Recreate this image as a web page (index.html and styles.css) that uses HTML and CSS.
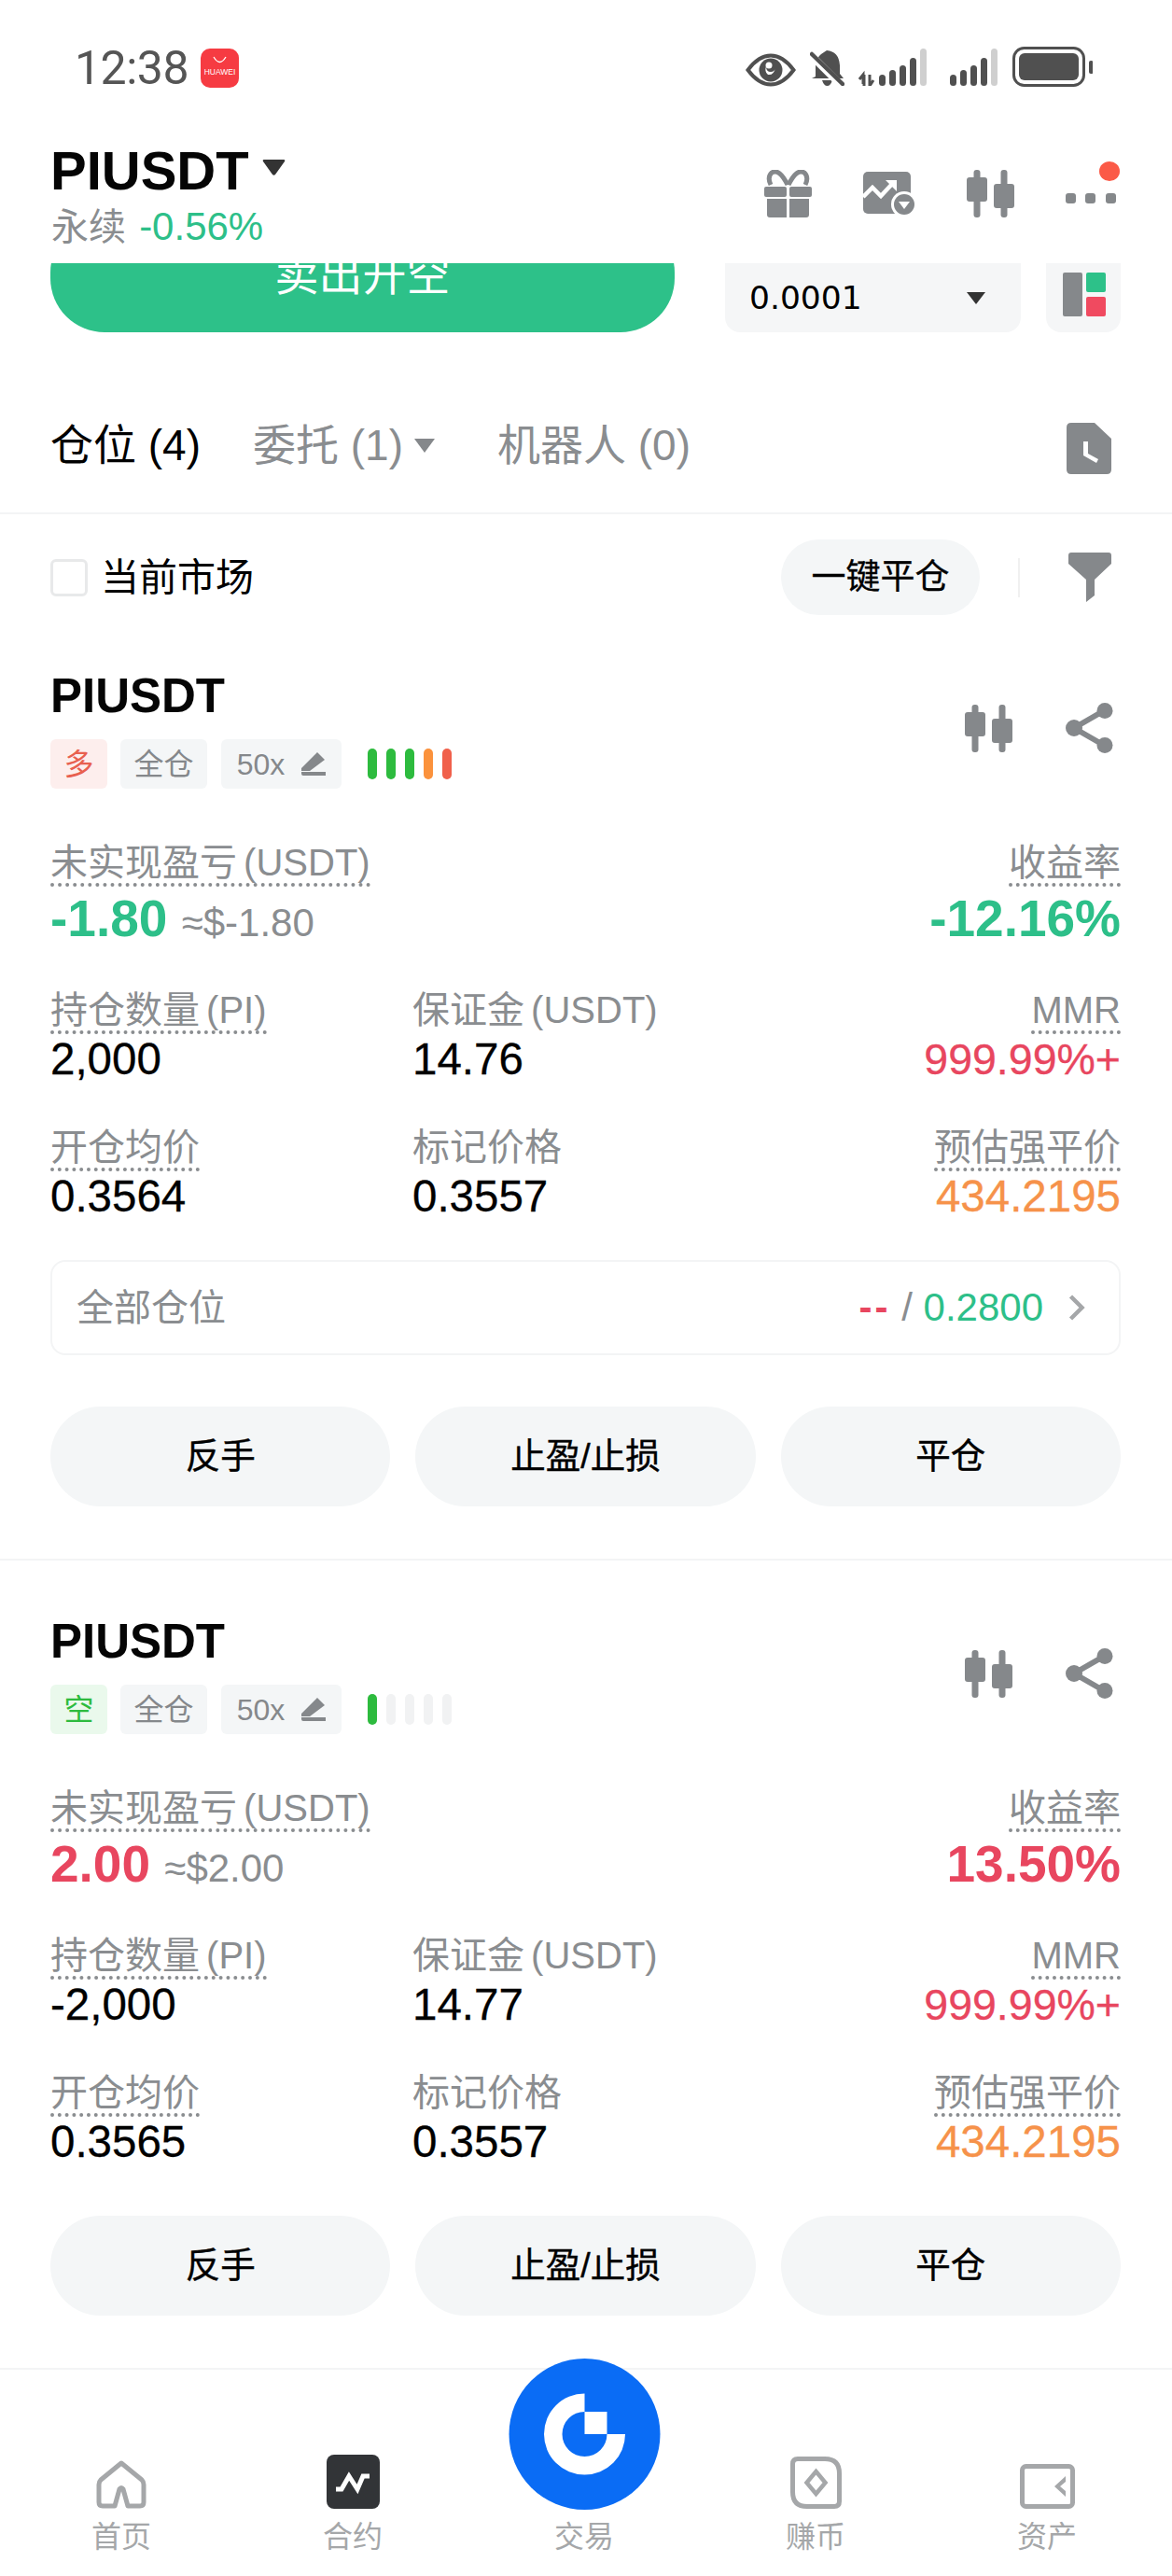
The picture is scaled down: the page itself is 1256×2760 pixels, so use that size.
FILE: index.html
```html
<!DOCTYPE html>
<html lang="zh">
<head>
<meta charset="utf-8">
<title>PIUSDT</title>
<link rel="stylesheet" href="styles.css">
</head>
<body>
<div class="page">
  <svg width="0" height="0" class="defs">
    <defs>
      <g id="candles">
        <rect x="7.500" y="0" width="7" height="51" rx="3"/>
        <rect x="0" y="8" width="22" height="26" rx="3"/>
        <rect x="36.500" y="0" width="7" height="51" rx="3"/>
        <rect x="29" y="15" width="22" height="26" rx="3"/>
      </g>
    </defs>
  </svg>

  <div class="status">
    <span class="time">12:38</span>
    <svg class="hw" width="41" height="42" viewBox="0 0 41 42">
      <rect width="41" height="42" rx="10" fill="#f63b42"/>
      <path d="M14 9 Q20.500 20 27 9" fill="none" stroke="#fff" stroke-width="1.300"/>
      <text x="20.500" y="28" text-anchor="middle" class="hw-text">HUAWEI</text>
    </svg>
    <div class="status-right">
      <svg width="54" height="36" viewBox="0 0 54 36">
        <path d="M2.500 18 Q14 2.500 27 2.500 Q40 2.500 51.500 18 Q40 33.500 27 33.500 Q14 33.500 2.500 18 Z" fill="none" stroke="#505050" stroke-width="4"/>
        <circle cx="27" cy="18" r="12.500" fill="#505050"/>
        <path d="M22 14 Q22 20 27 20 Q31 20 32 16 Q30 24 24 23 Q20 20 22 14 Z" fill="#fff"/>
        <circle cx="25" cy="13" r="3.500" fill="#fff"/>
      </svg>
      <svg class="bell" width="37" height="40" viewBox="0 0 37 40">
        <path d="M18 2 Q31 3 32 18 V27 L36 32 H2 L6 30 V17 Q7 10 12 6 Z" fill="#505050"/>
        <path d="M13 34 H24 Q22 40 18.500 40 Q15 40 13 34 Z" fill="#505050"/>
        <path d="M2 8 L32 38" stroke="#fff" stroke-width="8"/>
        <path d="M2 6 L35 38" stroke="#505050" stroke-width="4.500" stroke-linecap="round"/>
      </svg>
      <svg class="sig1" width="73" height="40" viewBox="0 0 73 40">
        <path d="M5 38 V28 L1 33 M6 28 V40 M12 28 V40 L16 34" fill="none" stroke="#505050" stroke-width="3"/>
        <rect x="22" y="28" width="7" height="12" rx="3.500" fill="#505050"/>
        <rect x="33" y="23" width="7" height="17" rx="3.500" fill="#505050"/>
        <rect x="44" y="18" width="7" height="22" rx="3.500" fill="#505050"/>
        <rect x="55" y="10" width="7" height="30" rx="3.500" fill="#505050"/>
        <rect x="66" y="0" width="7" height="40" rx="3.500" fill="#cfcfcf"/>
      </svg>
      <svg class="sig2" width="51" height="40" viewBox="0 0 51 40">
        <rect x="0" y="28" width="7" height="12" rx="3.500" fill="#505050"/>
        <rect x="11" y="23" width="7" height="17" rx="3.500" fill="#505050"/>
        <rect x="22" y="18" width="7" height="22" rx="3.500" fill="#505050"/>
        <rect x="33" y="10" width="7" height="30" rx="3.500" fill="#505050"/>
        <rect x="44" y="0" width="7" height="40" rx="3.500" fill="#cfcfcf"/>
      </svg>
      <svg class="batt" width="86" height="43" viewBox="0 0 86 43">
        <rect x="1.500" y="1.500" width="75" height="40" rx="11" fill="none" stroke="#505050" stroke-width="3"/>
        <rect x="7" y="7" width="64" height="29" rx="6" fill="#505050"/>
        <rect x="82" y="15" width="4.500" height="14" rx="2" fill="#505050"/>
      </svg>
    </div>
  </div>

  <header class="header">
    <div class="header-left">
      <div class="symbol">
        <span class="symbol-name">PIUSDT</span>
        <svg class="symbol-arrow" width="25" height="17" viewBox="0 0 25 17"><path d="M2 0 H23 Q25 0 24 2 L14 16 Q12.500 17.500 11 16 L1 2 Q0 0 2 0 Z" fill="#333"/></svg>
      </div>
      <div class="sub"><span class="muted">永续</span> <span class="down sub-pct">-0.56%</span></div>
    </div>
    <div class="header-icons">
      <svg width="51" height="51" viewBox="0 0 51 51" class="ico">
        <path d="M25 16 Q16 -2 8 3 Q3 8 7 16 M26 16 Q35 -2 43 3 Q48 8 44 16" fill="none" stroke="#85888b" stroke-width="5"/>
        <rect x="0" y="18" width="24" height="11" rx="2"/><rect x="27" y="18" width="24" height="11" rx="2"/>
        <path d="M3 31 H24 V51 H6 Q3 51 3 48 Z M27 31 H48 V48 Q48 51 45 51 H27 Z"/>
      </svg>
      <svg width="56" height="47" viewBox="0 0 56 47" class="ico">
        <rect x="0" y="0" width="51" height="45" rx="5"/>
        <path d="M0 27 L10 17 L19 26 L33 11" fill="none" stroke="#fff" stroke-width="4.500"/>
        <path d="M24 9 H36 V21 Z" fill="#fff"/>
        <circle cx="44" cy="35" r="14" fill="#fff"/>
        <circle cx="44" cy="35" r="11"/>
        <path d="M38 32 H50 L44 40 Z" fill="#fff"/>
      </svg>
      <svg width="51" height="51" viewBox="0 0 51 51" class="ico"><use href="#candles"/></svg>
      <div class="more">
        <svg width="54" height="11" viewBox="0 0 54 11" class="ico">
          <rect x="0" y="0" width="11" height="11" rx="3"/><rect x="21" y="0" width="11" height="11" rx="3"/><rect x="43" y="0" width="11" height="11" rx="3"/>
        </svg>
        <span class="red-dot"></span>
      </div>
    </div>
  </header>

  <div class="trade">
    <div class="sell">卖出开空</div>
    <div class="depth"><span class="depth-val">0.0001</span><svg width="20" height="13" viewBox="0 0 20 13"><path d="M0 0 H20 L10 13 Z" fill="#333"/></svg></div>
    <div class="layout">
      <svg width="46" height="47" viewBox="0 0 46 47">
        <rect x="0" y="0" width="21" height="47" rx="2" fill="#85888b"/>
        <rect x="25" y="0" width="21" height="21" rx="2" fill="#2dc189"/>
        <rect x="25" y="26" width="21" height="21" rx="2" fill="#f04a60"/>
      </svg>
    </div>
  </div>

  <nav class="tabs">
    <span class="tab tab-on">仓位 (4)</span>
    <span class="tab">委托 (1)<svg class="tab-arrow" width="22" height="15" viewBox="0 0 22 15"><path d="M0 0 H22 L11 15 Z" fill="#85888b"/></svg></span>
    <span class="tab">机器人 (0)</span>
    <svg class="doc ico" width="48" height="55" viewBox="0 0 48 55">
      <path d="M5 0 H30 L48 17 V50 Q48 55 43 55 H5 Q0 55 0 50 V5 Q0 0 5 0 Z"/>
      <path d="M18 20 H23 V33 L34 39 L32 43 L18 35 Z" fill="#fff"/>
    </svg>
  </nav>

  <div class="filter">
    <span class="check"></span>
    <span class="check-label">当前市场</span>
    <span class="pill">一键平仓</span>
    <span class="vline"></span>
    <svg class="ico" width="46" height="53" viewBox="0 0 46 53"><path d="M3 0 H43 Q46 0 46 3 V12 L28 29 V46 L19 53 V29 L0 12 V3 Q0 0 3 0 Z"/></svg>
  </div>

  <main class="list">
    <section class="card">
      <div class="card-head">
        <div>
          <div class="card-title">PIUSDT</div>
          <div class="tags">
            <span class="tag tag-long">多</span>
            <span class="tag tag-grey tag-mode">全仓</span>
            <span class="tag tag-grey tag-lev">50x
              <svg class="ico" width="26" height="25" viewBox="0 0 26 25"><path d="M0 17 L14 3 L17 0 L25 8 L9 20 H0 Z M0 21 H26 V25 H2 Q0 25 0 23 Z"/></svg>
            </span>
            <span class="bars"><i class="bar on"></i><i class="bar on"></i><i class="bar on"></i><i class="bar warn"></i><i class="bar hot"></i></span>
          </div>
        </div>
        <div class="card-icons">
          <svg width="51" height="51" viewBox="0 0 51 51" class="ico"><use href="#candles"/></svg>
          <svg width="51" height="54" viewBox="0 0 51 54" class="ico">
            <path d="M42 8 L9 27 L42 46" fill="none" stroke="#85888b" stroke-width="6"/>
            <circle cx="42" cy="8.500" r="8.500"/><circle cx="9" cy="27" r="9"/><circle cx="42" cy="45.500" r="8.500"/>
          </svg>
        </div>
      </div>

      <div class="stats">
        <div class="row row-top">
          <div class="cell">
            <span class="label dot">未实现盈亏 (USDT)</span>
            <div class="big down">-1.80 <span class="approx">≈$-1.80</span></div>
          </div>
          <div class="cell cell-end">
            <span class="label dot">收益率</span>
            <div class="big down">-12.16%</div>
          </div>
        </div>
        <div class="row">
          <div class="cell"><span class="label dot">持仓数量 (PI)</span><div class="val">2,000</div></div>
          <div class="cell"><span class="label">保证金 (USDT)</span><div class="val">14.76</div></div>
          <div class="cell cell-end"><span class="label dot">MMR</span><div class="val up val-mmr">999.99%+</div></div>
        </div>
        <div class="row">
          <div class="cell"><span class="label dot">开仓均价</span><div class="val">0.3564</div></div>
          <div class="cell"><span class="label">标记价格</span><div class="val">0.3557</div></div>
          <div class="cell cell-end"><span class="label dot">预估强平价</span><div class="val warn-text">434.2195</div></div>
        </div>
      </div>

      <div class="all">
        <span class="all-label">全部仓位</span>
        <span class="all-val"><span class="up dash">--</span> <span class="slash">/</span> <span class="down">0.2800</span></span>
        <svg width="18" height="28" viewBox="0 0 18 28"><path d="M2.500 2 L14.500 14 L2.500 26" fill="none" stroke="#a5a7a9" stroke-width="4.500"/></svg>
      </div>

      <div class="actions actions-after-all">
        <span class="btn">反手</span><span class="btn">止盈/止损</span><span class="btn">平仓</span>
      </div>
    </section>

    <section class="card">
      <div class="card-head">
        <div>
          <div class="card-title">PIUSDT</div>
          <div class="tags">
            <span class="tag tag-short">空</span>
            <span class="tag tag-grey tag-mode">全仓</span>
            <span class="tag tag-grey tag-lev">50x
              <svg class="ico" width="26" height="25" viewBox="0 0 26 25"><path d="M0 17 L14 3 L17 0 L25 8 L9 20 H0 Z M0 21 H26 V25 H2 Q0 25 0 23 Z"/></svg>
            </span>
            <span class="bars"><i class="bar on"></i><i class="bar"></i><i class="bar"></i><i class="bar"></i><i class="bar"></i></span>
          </div>
        </div>
        <div class="card-icons">
          <svg width="51" height="51" viewBox="0 0 51 51" class="ico"><use href="#candles"/></svg>
          <svg width="51" height="54" viewBox="0 0 51 54" class="ico">
            <path d="M42 8 L9 27 L42 46" fill="none" stroke="#85888b" stroke-width="6"/>
            <circle cx="42" cy="8.500" r="8.500"/><circle cx="9" cy="27" r="9"/><circle cx="42" cy="45.500" r="8.500"/>
          </svg>
        </div>
      </div>

      <div class="stats">
        <div class="row row-top">
          <div class="cell">
            <span class="label dot">未实现盈亏 (USDT)</span>
            <div class="big up">2.00 <span class="approx">≈$2.00</span></div>
          </div>
          <div class="cell cell-end">
            <span class="label dot">收益率</span>
            <div class="big up">13.50%</div>
          </div>
        </div>
        <div class="row">
          <div class="cell"><span class="label dot">持仓数量 (PI)</span><div class="val">-2,000</div></div>
          <div class="cell"><span class="label">保证金 (USDT)</span><div class="val">14.77</div></div>
          <div class="cell cell-end"><span class="label dot">MMR</span><div class="val up val-mmr">999.99%+</div></div>
        </div>
        <div class="row">
          <div class="cell"><span class="label dot">开仓均价</span><div class="val">0.3565</div></div>
          <div class="cell"><span class="label">标记价格</span><div class="val">0.3557</div></div>
          <div class="cell cell-end"><span class="label dot">预估强平价</span><div class="val warn-text">434.2195</div></div>
        </div>
      </div>

      <div class="actions">
        <span class="btn">反手</span><span class="btn">止盈/止损</span><span class="btn">平仓</span>
      </div>
    </section>
  </main>

  <footer class="nav">
    <div class="nav-item">
      <svg width="54" height="52" viewBox="0 0 54 52"><path d="M27 3 L49 21 Q51 23 51 26 V45 Q51 49 47 49 H34 L29 31 Q27 28 25 31 L20 49 H7 Q3 49 3 45 V26 Q3 23 5 21 Z" fill="none" stroke="#a5a7a9" stroke-width="5" stroke-linejoin="round"/></svg>
      <span>首页</span>
    </div>
    <div class="nav-item">
      <svg width="57" height="58" viewBox="0 0 57 58"><rect width="57" height="58" rx="8" fill="#323437"/><path d="M10 37 H16 L24 23 L33 37 L39 23 H46" fill="none" stroke="#fff" stroke-width="5"/></svg>
      <span>合约</span>
    </div>
    <div class="nav-item">
      <svg class="nav-gap" width="10" height="58" viewBox="0 0 10 58"></svg>
      <span>交易</span>
    </div>
    <div class="nav-item">
      <svg width="55" height="56" viewBox="0 0 55 56">
        <path d="M8 2.500 H37 Q52.500 2.500 52.500 18 V48 Q52.500 53.500 47 53.500 H18 Q2.500 53.500 2.500 38 V8 Q2.500 2.500 8 2.500 Z" fill="none" stroke="#a5a7a9" stroke-width="5"/>
        <path d="M27.500 16 L37.500 28 L27.500 40 L17.500 28 Z" fill="none" stroke="#a5a7a9" stroke-width="4.500"/>
      </svg>
      <span>赚币</span>
    </div>
    <div class="nav-item">
      <svg width="59" height="48" viewBox="0 0 59 48">
        <rect x="2.500" y="2.500" width="54" height="43" rx="4" fill="none" stroke="#a5a7a9" stroke-width="5"/>
        <path d="M49 13 V19 L43 24 L49 29 V35 L37 24 Z" fill="#a5a7a9"/>
      </svg>
      <span>资产</span>
    </div>
    <svg class="trade-btn" width="163" height="162" viewBox="-81.500 -81 163 162">
      <circle r="81" fill="#0a6cf5"/>
      <path d="M0 -43.500 A43.500 43.500 0 1 0 43.500 0 H24 A24 24 0 1 1 0 -24 Z" fill="#fff"/>
      <rect x="0" y="-24" width="24" height="24" fill="#fff"/>
    </svg>
  </footer>
</div>
</body>
</html>
```
FILE: styles.css
```css
* { box-sizing: border-box; }
html, body { margin: 0; padding: 0; background: #fff; }
body { font-family: "Liberation Sans", "Noto Sans CJK SC", sans-serif; color: #000; }

.page { width: 1256px; height: 2760px; display: flex; flex-direction: column; overflow: hidden; }
.defs { position: absolute; }
.ico { fill: #85888b; display: block; flex: none; }

/* status bar */
.status { height: 130px; flex: none; display: flex; align-items: flex-start; padding: 50px 85px 0 80px; }
.time { font-family: Roboto, sans-serif; font-size: 50px; line-height: 47px; color: #555; letter-spacing: -0.5px; }
.hw { margin: 2px 0 0 13px; }
.hw-text { font-size: 8.5px; fill: #fff; font-family: "Liberation Sans", sans-serif; }
.status-right { margin-left: auto; display: flex; align-items: flex-end; height: 43px; }
.bell { margin-left: 15px; margin-bottom: 1px; }
.sig1 { margin-left: 15px; margin-bottom: 1px; }
.sig2 { margin-left: 25px; margin-bottom: 1px; }
.batt { margin-left: 16px; }

/* header */
.header { height: 152px; flex: none; display: flex; justify-content: space-between; padding: 23px 60px 0 54px; }
.symbol { display: flex; align-items: center; height: 60px; }
.symbol-name { font-size: 58px; line-height: 60px; font-weight: 700; color: #050505; }
.symbol-arrow { margin: -8px 0 0 14px; }
.sub { margin: 8px 0 0 1px; font-size: 40px; line-height: 44px; }
.sub-pct { font-size: 42px; margin-left: 3px; }
.muted { color: #8a8d90; }
.down { color: #2dbf89; }
.up { color: #e8465f; }
.header-icons { display: flex; align-items: center; gap: 55px; height: 103px; padding-top: 5px; }
.more { position: relative; padding-top: 0; margin-top: 10px; }
.red-dot { position: absolute; left: 36px; top: -34px; width: 22px; height: 21px; border-radius: 50%; background: #fb5a47; }

/* trade strip */
.trade { height: 74px; flex: none; overflow: hidden; display: flex; padding: 0 55px 0 54px; }
.sell { width: 669px; height: 122px; margin-top: -48px; flex: none; background: #2dc189; border-radius: 58px; color: #fff; font-size: 47px; line-height: 122px; text-align: center; }
.depth { width: 317px; margin-left: 54px; flex: none; background: #f5f6f7; border-radius: 0 0 16px 16px; display: flex; align-items: center; justify-content: space-between; padding: 0 38px 0 26px; }
.depth-val { font-family: "DejaVu Sans", sans-serif; font-size: 34.5px; line-height: 40px; }
.layout { width: 80px; margin-left: 27px; flex: none; background: #f5f6f7; border-radius: 0 0 16px 16px; padding: 10px 0 0 18px; }

/* tabs */
.tabs { height: 195px; flex: none; border-bottom: 2px solid #f3f4f5; display: flex; align-items: center; padding: 48px 65px 0 54px; }
.tab { font-size: 46px; line-height: 60px; color: #8a8d90; margin-right: 56px; display: flex; align-items: center; white-space: pre; }
.tab-on { color: #000; }
.tab-arrow { margin-left: 12px; margin-right: 11px; margin-top: 2px; }
.doc { margin-left: auto; margin-top: 7px; }

/* filter */
.filter { height: 108px; flex: none; display: flex; align-items: center; padding: 27px 65px 0 54px; }
.check { width: 40px; height: 40px; border: 3px solid #e8e9ea; border-radius: 6px; flex: none; }
.check-label { margin-left: 14px; font-size: 41px; line-height: 48px; }
.pill { margin-left: auto; width: 213px; height: 81px; border-radius: 41px; background: #f4f6f7; font-size: 37px; line-height: 81px; text-align: center; -webkit-text-stroke: 0.3px #000; }
.vline { width: 2px; height: 42px; background: #f0f0f0; margin: 0 52px 0 41px; }

/* cards */
.list { flex: none; }
.card { padding: 62px 55px 56px 54px; border-bottom: 2px solid #f3f4f5; position: relative; }
.card-head { display: flex; justify-content: space-between; align-items: flex-start; }
.card-title { font-size: 51px; line-height: 50px; font-weight: 700; padding-left: 0; color: #050505; }
.tags { display: flex; align-items: center; margin-top: 21px; gap: 14px; height: 53px; }
.tag { height: 53px; border-radius: 6px; font-size: 32px; line-height: 52px; display: flex; align-items: center; justify-content: center; flex: none; }
.tag-long { width: 61px; background: #fdeeed; color: #e8604f; }
.tag-short { width: 61px; background: #eaf9ec; color: #2dbb3e; }
.tag-grey { background: #f4f6f7; color: #85888b; }
.tag-mode { width: 93px; }
.tag-lev { width: 129px; gap: 18px; margin-left: 1px; }
.bars { display: flex; gap: 10px; margin-left: 14px; }
.bar { width: 10px; height: 33px; border-radius: 5px; background: #f1f2f3; display: block; }
.bar.on { background: #2dbb3e; }
.bar.warn { background: #fb923c; }
.bar.hot { background: #f0604b; }
.card-icons { display: flex; gap: 57px; margin: 32px 8px 0 0; align-items: center; }

.stats { margin-top: 57px; display: flex; flex-direction: column; gap: 43px; }
.row { display: grid; grid-template-columns: 388px 1fr auto; }
.row-top { grid-template-columns: 1fr auto; }
.cell { display: flex; flex-direction: column; align-items: flex-start; }
.cell-end { align-items: flex-end; }
.label { font-size: 40px; line-height: 44px; height: 48px; color: #8a8d90; word-spacing: -4px; white-space: nowrap; }
.dot { border-bottom: 4px dotted #8a8d90; }
.val { font-size: 47.5px; line-height: 52px; margin-top: 1px; padding-bottom: 3px; -webkit-text-stroke: 0.3px currentColor; }
.val-mmr { font-size: 46.5px; }
.warn-text { color: #f6924a; }
.big { font-size: 55px; line-height: 56px; margin-top: 6px; font-weight: 700; white-space: nowrap; }
.approx { font-size: 42px; font-weight: 400; color: #8a8d90; }

.all { margin-top: 39px; height: 102px; border: 2px solid #f3f4f5; border-radius: 16px; display: flex; align-items: center; padding: 0 36px 0 26px; }
.all-label { font-size: 40px; line-height: 48px; color: #8a8d90; }
.all-val { margin-left: auto; font-size: 42px; line-height: 48px; margin-right: 27px; white-space: pre; }
.slash { color: #8a8d90; }
.dash { letter-spacing: 3px; font-weight: 700; }

.actions { margin-top: 50px; display: grid; grid-template-columns: repeat(3, 1fr); gap: 27px; }
.actions-after-all { margin-top: 55px; }
.btn { height: 107px; border-radius: 54px; background: #f4f6f7; font-size: 37.5px; line-height: 107px; text-align: center; -webkit-text-stroke: 0.4px #000; }

/* bottom nav */
.nav { flex: 1; min-height: 0; position: relative; display: grid; grid-template-columns: repeat(5, 248px); padding: 60px 0 0 6px; background: #fff; }
.nav-item { display: flex; flex-direction: column; align-items: center; justify-content: flex-end; font-size: 32px; line-height: 40px; color: #a5a7a9; padding-bottom: 22px; }
.nav-item svg { margin-bottom: 10px; }
.nav-gap { visibility: hidden; }
.trade-btn { position: absolute; left: 545px; top: -12px; }
```
